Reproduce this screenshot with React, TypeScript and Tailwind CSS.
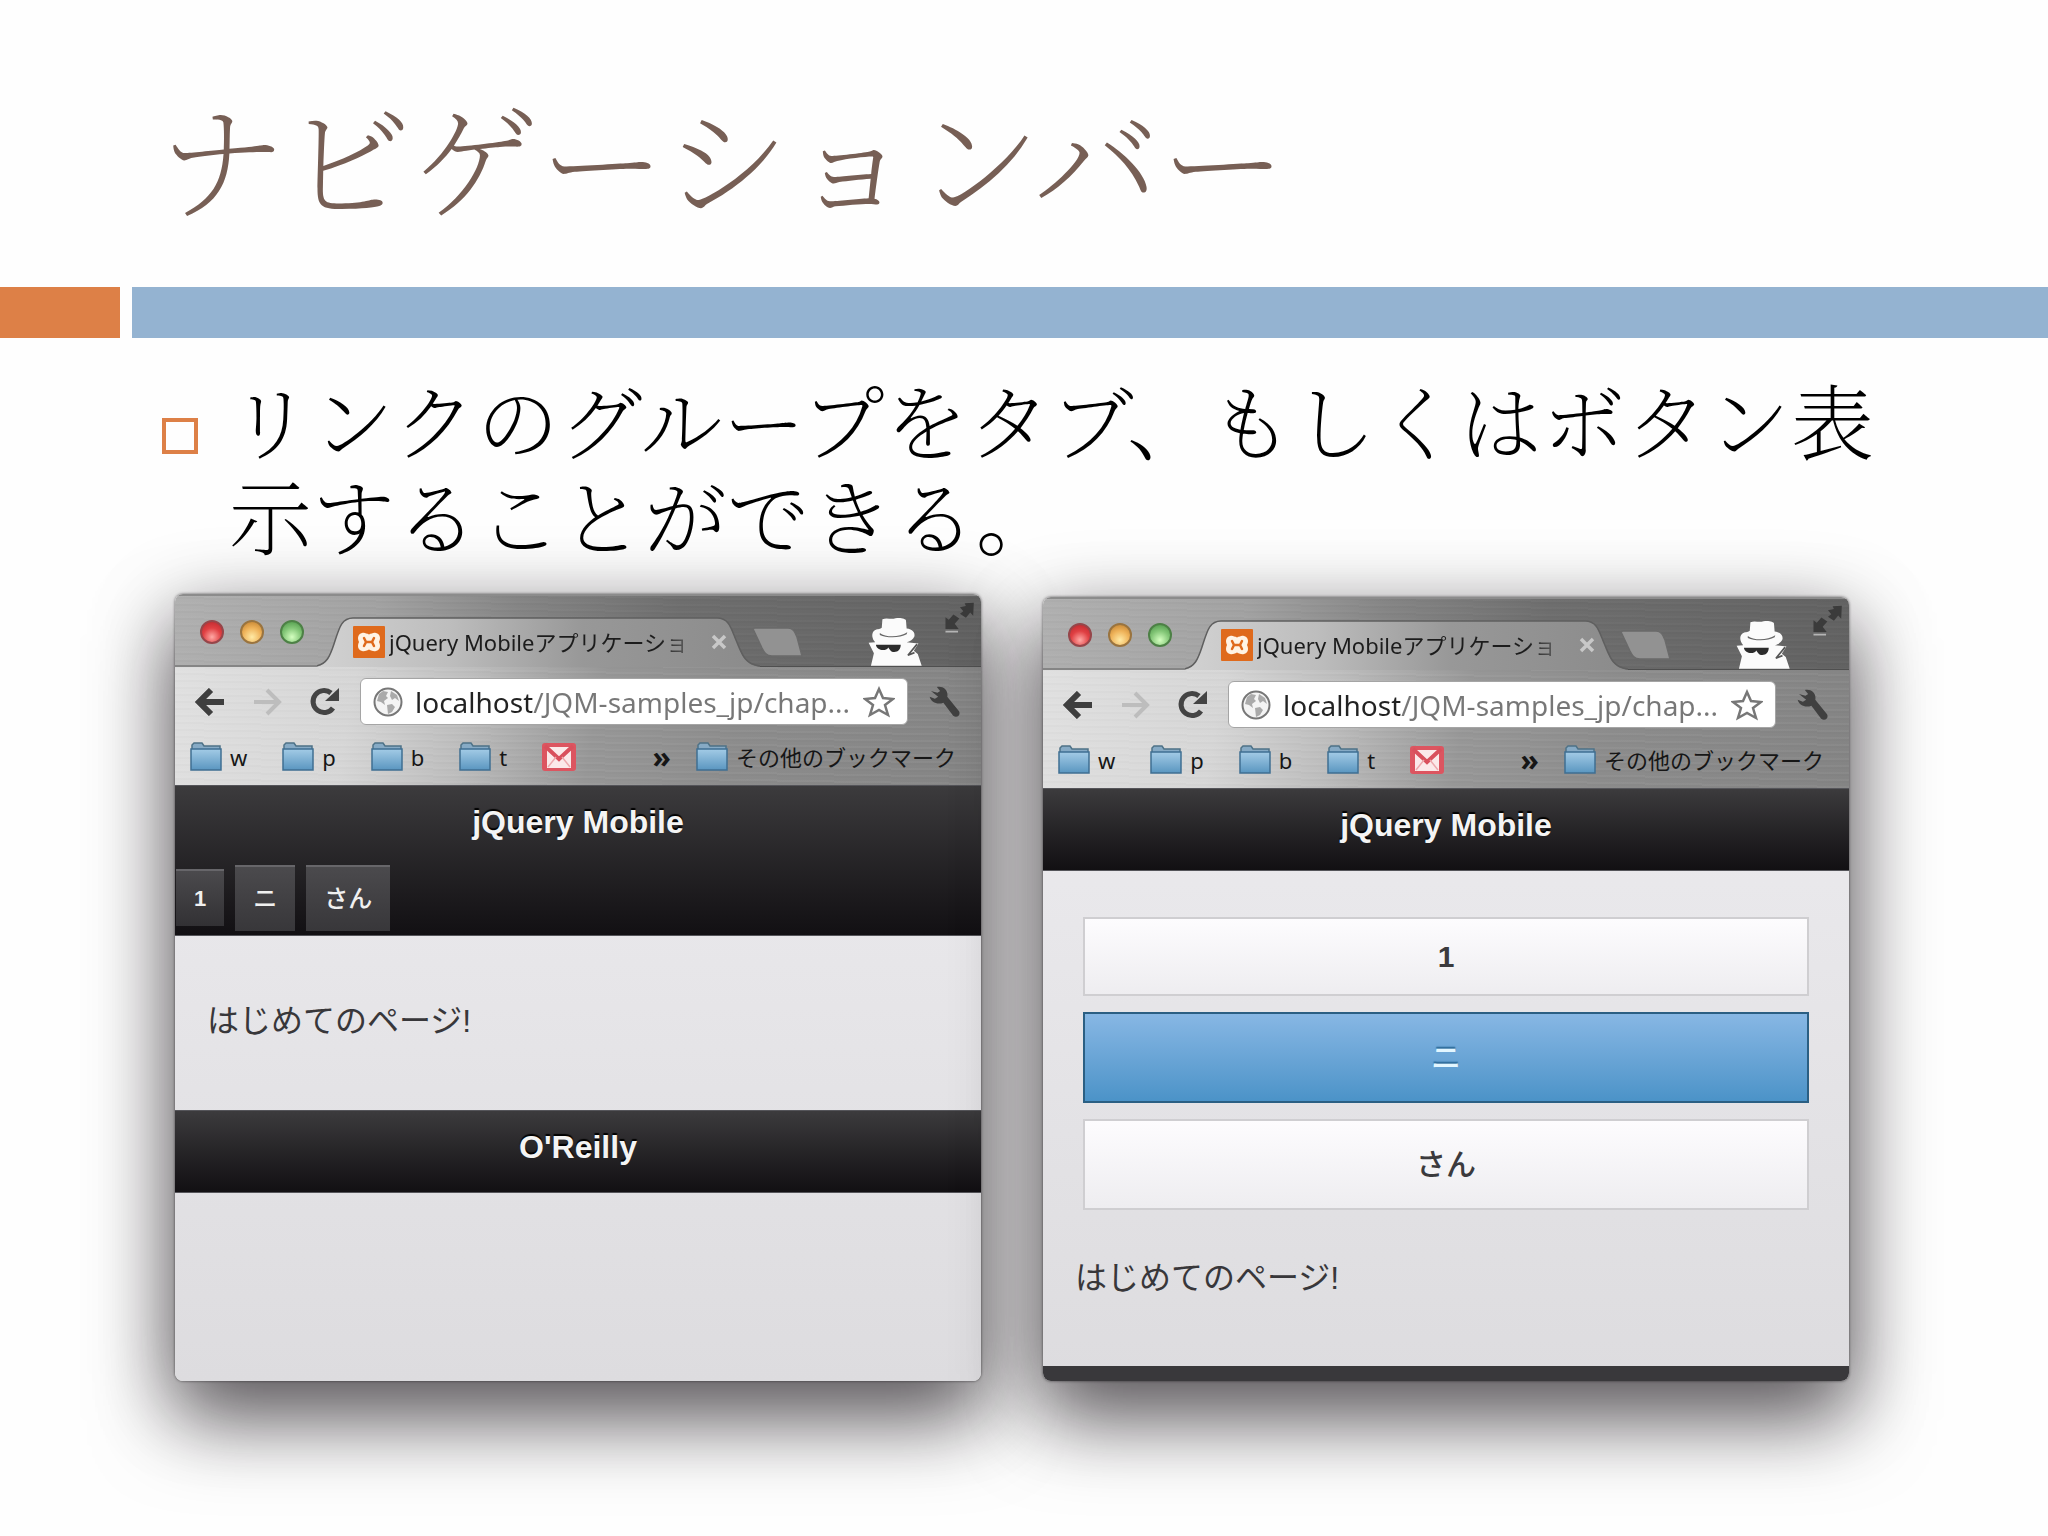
import type { ReactNode } from "react";

const bookmarks = ["w", "p", "b", "t"];

export default function App() {
  return (
    <main className="min-h-screen overflow-hidden bg-[#fefefe] pb-[154px] font-['Liberation_Sans','Noto_Sans_CJK_JP',sans-serif]">
      <h1 className="pt-20 pb-[57px] pl-[158px] font-['Noto_Serif_CJK_JP','Noto_Sans_CJK_JP',serif] text-[127px] leading-[150px] font-extralight text-[#775f55]">
        ナビゲーションバー
      </h1>

      <div className="flex h-[51px] gap-3">
        <div className="w-[120px] bg-[#dd8047]" />
        <div className="flex-1 bg-[#94b3d1]" />
      </div>

      <ul className="pt-[33px] pr-[120px] pl-[162px]">
        <li className="flex gap-[31px] font-['Noto_Serif_CJK_JP','Noto_Sans_CJK_JP',serif] text-[83px] leading-[95px] font-extralight text-black">
          <span className="mt-[47px] h-9 w-9 shrink-0 border-4 border-[#dd8047]" />
          <p>リンクのグループをタブ、もしくはボタン表示することができる。</p>
        </li>
      </ul>

      <div className="mt-[33px] flex items-end gap-[62px] pr-[199px] pl-[175px]">
        <BrowserWindow>
          <header className="h-[151px] border-y border-[#55555a] bg-linear-to-b from-[#3c3b3d] to-[#121013]">
            <BarTitle>jQuery Mobile</BarTitle>
            <nav className="mt-[22px] flex items-end gap-[11px] px-px">
              <a
                href="#one"
                className="mb-[5px] border-t-2 border-[#67666a] bg-linear-to-b from-[#4b4a4d] to-[#323134] px-[18px] text-[22px] leading-[55px] font-bold text-[#f0f0f0]"
              >
                1
              </a>
              <NavTab href="#two">ニ</NavTab>
              <NavTab href="#three">さん</NavTab>
            </nav>
          </header>
          <p className="px-8 pt-[59px] pb-[63px] text-[32px] leading-[52px] text-[#38373a]">
            はじめてのページ!
          </p>
          <footer className="h-[83px] border-y border-[#55555a] bg-linear-to-b from-[#3c3b3d] to-[#121013]">
            <BarTitle>O'Reilly</BarTitle>
          </footer>
          <div className="h-[188px]" />
        </BrowserWindow>

        <BrowserWindow>
          <header className="h-[83px] border-y border-[#55555a] bg-linear-to-b from-[#3c3b3d] to-[#121013]">
            <BarTitle>jQuery Mobile</BarTitle>
          </header>
          <div className="flex flex-col gap-4 px-10 pt-[46px] text-[30px] font-bold">
            <button className="border-2 border-[#cfced1] bg-linear-to-b from-[#fdfcfe] to-[#eeedf0] leading-[75px] text-[#3b3a3d]">
              1
            </button>
            <button className="border-2 border-[#2b5f83] bg-linear-to-b from-[#87b7e4] to-[#4b93c8] leading-[87px] font-medium text-[#e2f6ff] text-shadow-[0_-2px_1px_#2f6d9c]">
              ニ
            </button>
            <button className="border-2 border-[#cfced1] bg-linear-to-b from-[#fdfcfe] to-[#eeedf0] leading-[87px] font-medium text-[#3b3a3d]">
              さん
            </button>
          </div>
          <p className="px-8 pt-[42px] pb-[62px] text-[32px] leading-[52px] text-[#38373a]">
            はじめてのページ!
          </p>
          <div className="h-[15px] bg-[#39383b]" />
        </BrowserWindow>
      </div>
    </main>
  );
}

function BrowserWindow({ children }: { children: ReactNode }) {
  return (
    <section className="flex-1 rounded-[8px] shadow-[0_40px_80px_rgba(15,10,15,0.5),0_20px_80px_rgba(15,10,15,0.38),0_0_3px_rgba(0,0,0,0.6)]">
      <div className="overflow-hidden rounded-[8px] bg-linear-to-b from-[#f0eff2] to-[#dddcdf]">
        <TabStrip />
        <Toolbar />
        {children}
      </div>
    </section>
  );
}

function TabStrip() {
  return (
    <div className="flex h-[73px] border-t-2 border-[#8c8c8c] bg-[repeating-linear-gradient(1deg,rgba(255,255,255,0.02)_0_2px,transparent_2px_5px,rgba(0,0,0,0.02)_5px_7px),linear-gradient(100deg,#b0b0b0_0%,#a2a2a2_25%,#858585_42%,#6e6e6e_62%,#626262_100%)] font-['Noto_Sans','Noto_Sans_CJK_JP',sans-serif]">
      <div className="flex w-[142px] items-start gap-4 border-b-2 border-[#858585] pt-6 pl-[25px]">
        <button
          aria-label="Close"
          className="h-6 w-6 rounded-full border-2 border-[#96464a] bg-[radial-gradient(circle_at_50%_75%,#ffa9a5,#e04043_50%,#b9262b)]"
        />
        <button
          aria-label="Minimize"
          className="h-6 w-6 rounded-full border-2 border-[#9a743f] bg-[radial-gradient(circle_at_50%_75%,#ffeaa5,#efb35a_50%,#bd7c2b)]"
        />
        <button
          aria-label="Zoom"
          className="h-6 w-6 rounded-full border-2 border-[#4d8146] bg-[radial-gradient(circle_at_50%_75%,#d4ffc0,#84c778_50%,#489344)]"
        />
      </div>

      <div className="relative flex w-[443px] items-center pt-5 pl-9">
        <svg
          viewBox="0 0 443 71"
          preserveAspectRatio="none"
          className="absolute inset-0 h-full w-full"
        >
          <defs>
            <linearGradient id="tabMetal">
              <stop offset="0" stopColor="#d2d2d2" />
              <stop offset="0.3" stopColor="#bdbdbd" />
              <stop offset="0.6" stopColor="#989898" />
              <stop offset="1" stopColor="#8b8b8b" />
            </linearGradient>
          </defs>
          <path
            d="M-1 71C10 69 13 60 17 48C22 33 24 22 36 22H400C412 22 414 32 419 44C425 58 427 69 443 71Z"
            fill="url(#tabMetal)"
          />
          <path
            d="M-1 70C10 68 13 60 17 48C22 33 24 22 36 22H400C412 22 414 32 419 44C425 58 427 68 443 70"
            fill="none"
            stroke="#5f5f5f"
            strokeWidth="1.5"
          />
        </svg>
        <XamppIcon />
        <span className="relative ml-1 h-8 w-[306px] overflow-hidden text-[22px] leading-8 whitespace-nowrap text-[#1c1c1c] [mask-image:linear-gradient(to_right,black_270px,transparent_320px)]">
          jQuery Mobileアプリケーショ
        </span>
        <button aria-label="Close tab" className="relative ml-4">
          <svg width="16" height="16" viewBox="0 0 16 16">
            <path d="M2 2L14 14M14 2L2 14" stroke="#c8c8c8" strokeWidth="3.5" />
          </svg>
        </button>
      </div>

      <div className="flex flex-1 border-b border-[#4f4f4f]">
        <button aria-label="New tab" className="-ml-2 self-start pt-[31px]">
          <svg width="51" height="31" viewBox="0 0 51 31">
            <path
              d="M3 1H36C41 1 43 5 45 10L50 29H20C14 29 12 25 10 21L2 4C1 2 1 1 3 1Z"
              fill="#929292"
              stroke="#6a6a6a"
              strokeWidth="1.5"
            />
          </svg>
        </button>
        <div className="ml-auto self-end">
          <IncognitoIcon />
        </div>
        <button aria-label="Full screen" className="mr-1.5 ml-5 self-start pt-1.5">
          <svg width="32" height="31" viewBox="312 30 94 94">
            <path
              d="M362 46L380 42L376 34L404 32L402 72L393 62L380 78L362 66L372 58Z"
              fill="#3b3b3b"
            />
            <path
              d="M318 76L328 84L342 68L360 80L346 96L358 112H318Z"
              fill="#3b3b3b"
            />
            <path d="M318 120H356" stroke="#b5b5b5" strokeWidth="5" />
          </svg>
        </button>
      </div>
    </div>
  );
}

function Toolbar() {
  return (
    <div className="h-[118px] bg-[repeating-linear-gradient(1deg,rgba(255,255,255,0.04)_0_2px,transparent_2px_5px,rgba(0,0,0,0.015)_5px_7px),linear-gradient(100deg,#e0e0e0_0%,#d6d6d6_22%,#bdbdbd_36%,#979797_52%,#8c8c8c_70%,#848484_100%)] font-['Noto_Sans','Noto_Sans_CJK_JP',sans-serif]">
      <div className="flex items-center pt-[11px] pr-5 pl-5">
        <button aria-label="Back">
          <svg width="30" height="28" viewBox="0 0 30 28">
            <path
              d="M29 14H6M16 2L4 14L16 26"
              fill="none"
              stroke="#3f3f3f"
              strokeWidth="6"
            />
          </svg>
        </button>
        <button aria-label="Forward" className="ml-7">
          <svg width="30" height="28" viewBox="0 0 30 28">
            <path
              d="M1 14H24M14 2L26 14L14 26"
              fill="none"
              stroke="#bdbdbd"
              strokeWidth="4"
            />
          </svg>
        </button>
        <button aria-label="Reload" className="ml-[26px]">
          <svg width="31" height="30" viewBox="0 0 31 30">
            <path
              d="M24 21A11 11 0 1 1 22 6"
              fill="none"
              stroke="#444"
              strokeWidth="5"
            />
            <path d="M30 1V14H16Z" fill="#444" />
          </svg>
        </button>

        <div className="ml-5 flex h-[47px] flex-1 items-center rounded-md border border-[#a5a5a5] bg-white px-3">
          <svg width="30" height="30" viewBox="0 0 30 30">
            <circle cx="15" cy="15" r="13.5" fill="#f4f4f4" stroke="#777" strokeWidth="2" />
            <path
              d="M6 7L10 4L15 5L13 9L15 11L11 14L12 18L8 15L4 14ZM18 4L24 8L26 14L22 11L19 13L17 9ZM14 18L19 17L22 20L19 25L15 27Z"
              fill="#aaa"
            />
          </svg>
          <input
            aria-label="Address"
            readOnly
            value="localhost/JQM-samples_jp/chap..."
            className="ml-3 h-10 min-w-0 flex-1 bg-[linear-gradient(to_right,#222_117px,#777_117px)] bg-clip-text text-[28px] text-transparent outline-none"
          />
          <button aria-label="Bookmark this page">
            <svg width="32" height="32" viewBox="0 0 32 32">
              <path
                d="M16 3L20 12L30 13L22 19L25 29L16 24L7 29L10 19L2 13L12 12Z"
                fill="#fff"
                stroke="#777"
                strokeWidth="2.5"
              />
            </svg>
          </button>
        </div>

        <button aria-label="Settings" className="ml-[21px]">
          <svg width="32" height="32" viewBox="272 285 98 98">
            <path
              d="M278 300L298 306L306 300L296 288C316 284 332 298 328 318L364 362C370 374 358 384 346 376L316 336C298 344 278 334 274 318L290 324L300 318Z"
              fill="#404040"
            />
          </svg>
        </button>
      </div>

      <div className="flex items-center gap-[35px] pt-4 pr-[25px] pl-[15px] text-[22px] leading-8 text-[#161616]">
        {bookmarks.map((name) => (
          <a key={name} href={`#${name}`} className="flex items-center gap-2">
            <FolderIcon />
            {name}
          </a>
        ))}
        <a href="#mail" aria-label="Gmail">
          <svg width="34" height="28" viewBox="0 0 34 28">
            <rect width="34" height="28" rx="3" fill="#dc5560" />
            <path d="M5 4H29V25H5Z" fill="#fbe9e9" />
            <path d="M3 3L17 16L31 3" fill="none" stroke="#d9505c" strokeWidth="4" />
            <path d="M6 24L14 14M28 24L20 14" stroke="#eda9ad" strokeWidth="1.5" />
          </svg>
        </a>
        <button
          aria-label="More bookmarks"
          className="ml-auto -mr-2.5 text-[30px] leading-8 font-bold"
        >
          »
        </button>
        <a href="#other" className="flex items-center gap-2">
          <FolderIcon />
          その他のブックマーク
        </a>
      </div>
    </div>
  );
}

function BarTitle({ children }: { children: ReactNode }) {
  return (
    <h2 className="pt-[15px] text-center text-[32px] leading-[42px] font-bold text-[#f4f4f4] text-shadow-[0_-2px_1px_#000]">
      {children}
    </h2>
  );
}

function NavTab({ href, children }: { href: string; children: ReactNode }) {
  return (
    <a
      href={href}
      className="border-t-2 border-[#67666a] bg-linear-to-b from-[#4b4a4d] to-[#38373a] px-[18px] text-[24px] leading-[64px] font-medium text-[#f0f0f0]"
    >
      {children}
    </a>
  );
}

function XamppIcon() {
  return (
    <svg width="32" height="32" viewBox="0 0 32 32" className="relative">
      <rect width="32" height="32" rx="1" fill="#df6a1c" />
      <path
        d="M9 7C12 6 13 8 16 8S20 6 23 7C27 8 28 12 26 16C28 20 27 24 23 25C20 26 19 24 16 24S12 26 9 25C5 24 4 20 6 16C4 12 5 8 9 7Z"
        fill="#fff3e4"
      />
      <path
        d="M11 12L13 16L11 20M21 12L19 16L21 20M13 16H19"
        fill="none"
        stroke="#df6a1c"
        strokeWidth="2.5"
        strokeLinecap="round"
      />
      <path d="M14 5H18L16 9ZM14 27H18L16 23Z" fill="#df6a1c" />
    </svg>
  );
}

function IncognitoIcon() {
  return (
    <svg width="55" height="49" viewBox="86 74 168 148">
      <path
        d="M130 80C145 74 155 82 170 77C184 74 202 78 202 84L204 108C222 110 230 120 228 132C224 142 214 148 204 150L240 154L226 176L238 186L250 222H95L104 184L88 152L108 150C98 140 96 124 104 116C112 108 122 112 128 106Z"
        fill="#fbfbfb"
      />
      <path
        d="M122 122C140 136 182 136 206 120L204 126C184 138 142 138 122 128Z"
        fill="#666"
      />
      <path
        d="M110 158H186C186 172 178 180 166 180C156 180 152 172 148 166C142 178 114 178 110 158Z"
        fill="#2c2c2c"
      />
      <path d="M236 156L208 190L228 182" fill="none" stroke="#555" strokeWidth="5" />
    </svg>
  );
}

function FolderIcon() {
  return (
    <svg width="32" height="30" viewBox="0 0 32 30">
      <defs>
        <linearGradient id="folderBlue" x1="0" y1="0" x2="0" y2="1">
          <stop offset="0" stopColor="#a3cbe6" />
          <stop offset="1" stopColor="#5a96c0" />
        </linearGradient>
      </defs>
      <path d="M2 8V3L4 1H12L14 4H30V9H2Z" fill="#86aac5" stroke="#4e7287" strokeWidth="1.5" />
      <path d="M1 7H31V28H1Z" fill="url(#folderBlue)" stroke="#3f6f92" strokeWidth="1.5" />
    </svg>
  );
}
